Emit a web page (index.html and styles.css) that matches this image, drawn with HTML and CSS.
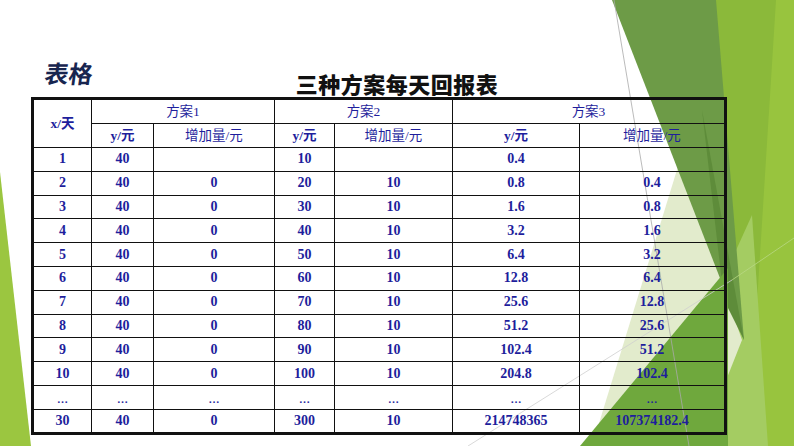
FILE: index.html
```html
<!DOCTYPE html>
<html lang="zh">
<head>
<meta charset="utf-8">
<title>三种方案每天回报表</title>
<link rel="stylesheet" href="styles.css">
</head>
<body>
<div class="slide">
  <svg class="bg" width="794" height="446" viewBox="0 0 794 446" aria-hidden="true">
    <polygon points="0,172 31,446 0,446" fill="#9bc640"/>
    <polygon points="712,0 794,0 794,446 640,446" fill="#8bb93a"/>
    <polygon points="776,0 794,0 794,446 748,446" fill="#98c43e"/>
    <polygon points="728,268 752,215 768,446 728,446" fill="#a4cc62"/>
    <polygon points="680,160 742,340 700,446 592,446" fill="#e2ebcc"/>
    <polygon points="612,0 716,0 744,340" fill="#6d9b47"/>
    <polygon points="702,110 744,340 724,300" fill="#5e8c3a"/>
    <polygon points="580,446 728,268 728,446" fill="#6fa83d"/>
    <line x1="614" y1="0" x2="689" y2="446" stroke="#a9a9a9" stroke-width="0.8"/>
    <line x1="468" y1="446" x2="732" y2="280" stroke="#cfcfcf" stroke-width="0.8"/>
    <line x1="732" y1="280" x2="794" y2="238" stroke="#b9d884" stroke-width="0.8"/>
  </svg>

  <header class="head">
    <div class="tag">表格</div>
    <h1 class="title">三种方案每天回报表</h1>
    <div class="spacer"></div>
  </header>

  <table class="tbl">
    <colgroup>
      <col class="c-x"><col class="c-y1"><col class="c-d1"><col class="c-y2"><col class="c-d2"><col class="c-y3"><col class="c-d3">
    </colgroup>
    <thead>
      <tr class="h1">
        <th rowspan="2" class="yb">x/天</th>
        <th colspan="2">方案1</th>
        <th colspan="2">方案2</th>
        <th colspan="2">方案3</th>
      </tr>
      <tr class="h2">
        <th class="yb">y/元</th><th>增加量/元</th>
        <th class="yb">y/元</th><th>增加量/元</th>
        <th class="yb">y/元</th><th>增加量/元</th>
      </tr>
    </thead>
    <tbody>
      <tr><td>1</td><td>40</td><td></td><td>10</td><td></td><td>0.4</td><td></td></tr>
      <tr><td>2</td><td>40</td><td>0</td><td>20</td><td>10</td><td>0.8</td><td>0.4</td></tr>
      <tr><td>3</td><td>40</td><td>0</td><td>30</td><td>10</td><td>1.6</td><td>0.8</td></tr>
      <tr><td>4</td><td>40</td><td>0</td><td>40</td><td>10</td><td>3.2</td><td>1.6</td></tr>
      <tr><td>5</td><td>40</td><td>0</td><td>50</td><td>10</td><td>6.4</td><td>3.2</td></tr>
      <tr><td>6</td><td>40</td><td>0</td><td>60</td><td>10</td><td>12.8</td><td>6.4</td></tr>
      <tr><td>7</td><td>40</td><td>0</td><td>70</td><td>10</td><td>25.6</td><td>12.8</td></tr>
      <tr><td>8</td><td>40</td><td>0</td><td>80</td><td>10</td><td>51.2</td><td>25.6</td></tr>
      <tr><td>9</td><td>40</td><td>0</td><td>90</td><td>10</td><td>102.4</td><td>51.2</td></tr>
      <tr><td>10</td><td>40</td><td>0</td><td>100</td><td>10</td><td>204.8</td><td>102.4</td></tr>
      <tr class="dots"><td>…</td><td>…</td><td>…</td><td>…</td><td>…</td><td>…</td><td>…</td></tr>
      <tr><td>30</td><td>40</td><td>0</td><td>300</td><td>10</td><td>214748365</td><td>107374182.4</td></tr>
    </tbody>
  </table>
</div>
</body>
</html>
```
FILE: styles.css
```css
* { box-sizing: border-box; }
html, body { margin: 0; padding: 0; background: #fff; }

.slide {
  position: relative;
  width: 794px;
  height: 446px;
  overflow: hidden;
  background: #fff;
  font-family: "Liberation Serif", "Noto Sans CJK SC", serif;
}

.bg {
  position: absolute;
  left: 0;
  top: 0;
  z-index: 0;
}

.head {
  position: relative;
  z-index: 1;
  display: grid;
  grid-template-columns: 1fr auto 1fr;
  align-items: start;
  padding-top: 59px;
  height: 97px;
}

.tag {
  padding-left: 43px;
  font-family: "Noto Sans CJK SC", sans-serif;
  font-weight: 700;
  font-size: 24px;
  line-height: 28px;
  color: #18254f;
  transform: skewX(-8deg);
  transform-origin: left bottom;
}

.title {
  margin: 11px 0 0 0;
  font-family: "Noto Sans CJK SC", sans-serif;
  font-weight: 900;
  font-size: 22px;
  line-height: 26px;
  color: #111;
  letter-spacing: 0.5px;
}

.tbl {
  position: relative;
  z-index: 1;
  margin-left: 31px;
  border-collapse: collapse;
  table-layout: fixed;
  width: 693px;
  border: 3px solid #111;
  color: #1e1e9c;
}

.c-x { width: 59px; }
.c-y1 { width: 62px; }
.c-d1 { width: 121px; }
.c-y2 { width: 60px; }
.c-d2 { width: 118px; }
.c-y3 { width: 127px; }
.c-d3 { width: 146px; }

.tbl th, .tbl td {
  border: 1.5px solid #111;
  padding: 0;
  text-align: center;
  vertical-align: middle;
  line-height: 1;
}

.tbl th {
  font-weight: 400;
  font-size: 13.5px;
  font-family: "Liberation Serif", "Noto Sans CJK SC", serif;
}

.tbl th.yb { font-weight: 700; }

.h1 th, .h2 th { height: 24.5px; }

.tbl td {
  height: 23.8px;
  font-size: 14px;
  font-weight: 700;
}

.dots td {
  font-size: 11px;
  padding-top: 4px;
}
```
